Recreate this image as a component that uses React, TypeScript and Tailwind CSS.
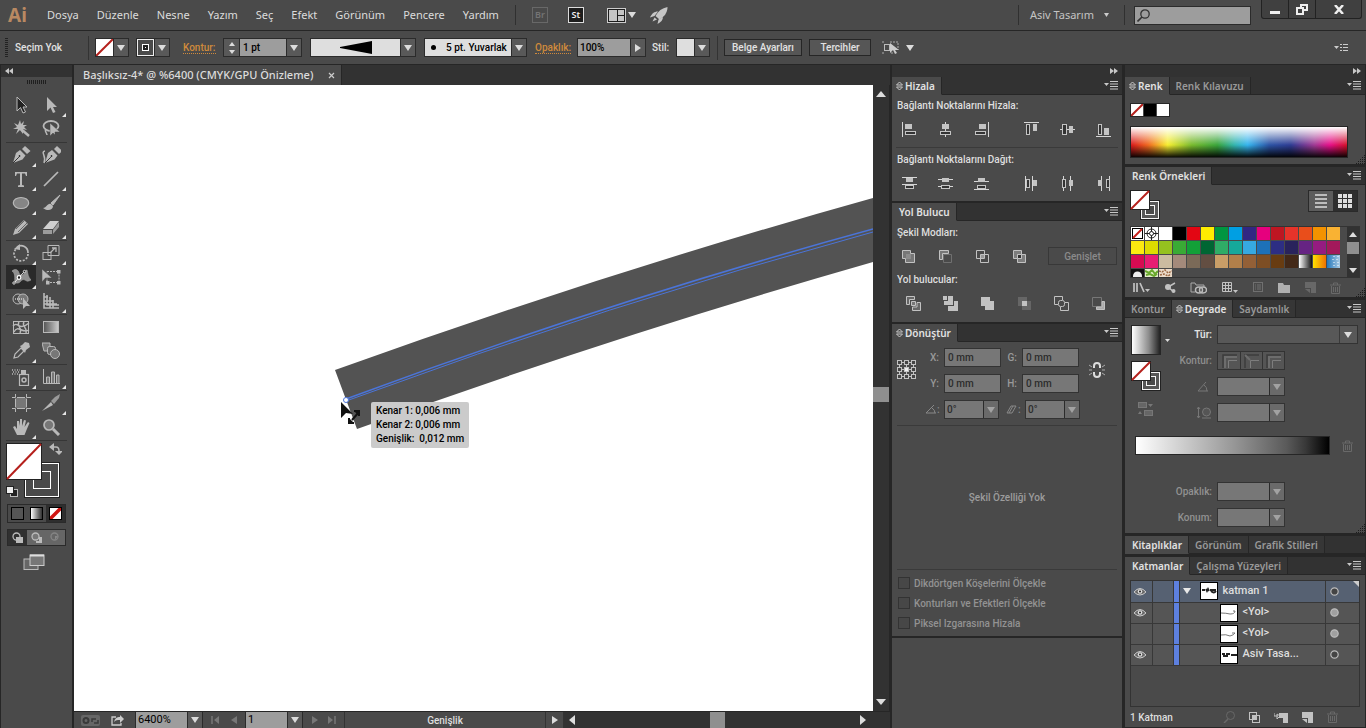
import React from "react";

type Kids = { children?: React.ReactNode };

/* ---------- shared pieces ---------- */

function Ic({ w, h, children, className = "" }: Kids & { w: number; h: number; className?: string }) {
  return (
    <svg width={w} height={h} viewBox={`0 0 ${w} ${h}`} fill="none" className={`shrink-0 ${className}`} aria-hidden="true">
      {children}
    </svg>
  );
}

const Down = ({ fill = "#dcdcdc" }: { fill?: string }) => (
  <Ic w={8} h={6}><path d="M0 0h8L4 6z" fill={fill} /></Ic>
);
const Right = ({ fill = "#dcdcdc" }: { fill?: string }) => (
  <Ic w={6} h={8}><path d="M0 0v8l6-4z" fill={fill} /></Ic>
);
const Left = ({ fill = "#dcdcdc" }: { fill?: string }) => (
  <Ic w={6} h={8}><path d="M6 0v8L0 4z" fill={fill} /></Ic>
);

const MenuGlyph = () => (
  <Ic w={14} h={9}>
    <path d="M0 2h5L2.500 5z" fill="#c8c8c8" />
    <path d="M6 .5h8M6 3h8M6 5.500h8M6 8h8" stroke="#c8c8c8" />
  </Ic>
);

const NoneSwatch = ({ s }: { s: number }) => (
  <Ic w={s} h={s}>
    <rect width={s} height={s} fill="#fff" />
    <path d={`M0 ${s}L${s} 0`} stroke="#b5201c" strokeWidth="2" />
  </Ic>
);

function FillStroke() {
  return (
    <button aria-label="Dolgu ve kontur" className="flex">
      <Ic w={30} h={30}>
        <rect x="10" y="10" width="20" height="20" fill="#222" />
        <rect x="11.500" y="11.500" width="17" height="17" fill="#565656" stroke="#f4f4f4" />
        <rect x="15.500" y="15.500" width="9" height="9" fill="#484848" stroke="#f4f4f4" />
        <rect width="20" height="20" fill="#222" />
        <rect x="1" y="1" width="18" height="18" fill="#fff" />
        <path d="M1 19L19 1" stroke="#b5201c" strokeWidth="2" />
      </Ic>
    </button>
  );
}

function ArrowBtn({ label, dim, right }: { label: string; dim?: boolean; right?: boolean }) {
  const c = dim ? "#a2a2a2" : "#dcdcdc";
  return (
    <button
      aria-label={label}
      className={`flex w-[15px] shrink-0 items-center justify-center self-stretch border-l border-[#2b2b2b] ${dim ? "bg-[#6a6a6a]" : "bg-[#595959]"}`}
    >
      {right ? <Right fill={c} /> : <Down fill={c} />}
    </button>
  );
}

function Collapse({ dir }: { dir: "l" | "r" }) {
  return (
    <div className={`flex h-3 shrink-0 items-center bg-[#323232] px-1 ${dir === "r" ? "justify-end" : ""}`}>
      <button aria-label="Panelleri daralt" className="flex">
        {dir === "l" ? (
          <Ic w={8} h={6}><path d="M4 0v6L0 3zM8 0v6L4 3z" fill="#c8c8c8" /></Ic>
        ) : (
          <Ic w={8} h={6}><path d="M0 0v6l4-3zM4 0v6l4-3z" fill="#c8c8c8" /></Ic>
        )}
      </button>
    </div>
  );
}

function Tabs({ items, active = 0, toggle, menu = true }: { items: string[]; active?: number; toggle?: boolean; menu?: boolean }) {
  return (
    <div className="flex h-[18px] shrink-0 items-stretch bg-[#323232] font-['Noto_Sans',sans-serif]" role="tablist">
      {items.map((t, i) => (
        <button
          key={t}
          role="tab"
          aria-selected={i === active}
          className={`flex items-center gap-[2px] border-r border-b border-r-[#262626] pt-px text-[10px] font-semibold whitespace-nowrap ${
            i === active
              ? `border-b-transparent bg-[#4a4a4a] text-[#e2e2e2] ${toggle ? "pr-[6px] pl-1" : "px-[6px] pl-[7px]"}`
              : "border-b-[#262626] bg-[#363636] px-[6px] text-[#999]"
          }`}
        >
          {i === active && toggle && (
            <Ic w={7} h={10}><path d="M.5 4l3-3 3 3zM.5 6l3 3 3-3z" stroke="#c8c8c8" /></Ic>
          )}
          {t}
        </button>
      ))}
      <div className="flex flex-1 items-center justify-end border-b border-[#262626] pr-1">
        {menu && <button aria-label={`${items[active]} menüsü`} className="flex"><MenuGlyph /></button>}
      </div>
    </div>
  );
}

function Panel({ children, className = "" }: Kids & { className?: string }) {
  return <section className={`flex shrink-0 flex-col border-b-2 border-[#262626] bg-[#4a4a4a] ${className}`}>{children}</section>;
}

const Grip = () => (
  <Ic w={9} h={9}>
    <path d="M8.500 0v9M6.500 2v7M4.500 4v5M2.500 6v3M.5 8v1" stroke="#1c1c1c" strokeDasharray="1 1" />
  </Ic>
);

const IconBtn = ({ label, children }: Kids & { label: string }) => (
  <button aria-label={label} className="flex h-4 w-4 items-center justify-center">{children}</button>
);

/* ---------- menu bar ---------- */

const menus = ["Dosya", "Düzenle", "Nesne", "Yazım", "Seç", "Efekt", "Görünüm", "Pencere", "Yardım"];

function MenuBar() {
  return (
    <header className="flex h-[30px] shrink-0 items-center text-[11px] text-[#dcdcdc]">
      <div className="w-[38px] pl-2 text-[19px] leading-[26px] font-bold text-[#b98962]">Ai</div>
      <nav className="flex items-center gap-[18px] pl-[9px]">
        {menus.map((m) => <button key={m}>{m}</button>)}
      </nav>
      <div className="ml-4 h-5 w-px bg-[#303030]" />
      <div className="flex items-center pl-4">
        <button className="h-4 w-4 border border-[#686868] text-[9px] leading-[14px] font-semibold text-[#747474]">Br</button>
        <button className="ml-5 h-4 w-4 border border-[#dcdcdc] bg-[#1d1d1d] text-[9px] leading-[14px] font-semibold text-[#f0f0f0]">St</button>
        <button aria-label="Belgeleri düzenle" className="ml-[23px] flex items-center gap-[2px]">
          <Ic w={19} h={15}>
            <rect x=".5" y=".5" width="18" height="14" fill="#1c1c1c" stroke="#ccc" />
            <path d="M2 2h8v11H2zM11 2h6v5h-6zM11 8h6v5h-6z" fill="#c4c4c4" />
          </Ic>
          <Down />
        </button>
        <button aria-label="GPU performansı" className="ml-[14px] flex">
          <Ic w={18} h={17}>
            <path d="M17.500 0C12 1 8 4 5.500 9l4 3.500c5-3 8-7 8-12.500z" fill="#c6c6c6" />
            <path d="M8 4.500C4 4.500 2 6.500 0 10.500l4.500-1.500zM13 10c0 3-2 5-5.500 7l1-4.500zM4.500 10.500L2.500 14.500l4.500-2z" fill="#c6c6c6" />
          </Ic>
        </button>
      </div>
      <div className="ml-auto flex h-full items-center">
        <div className="h-5 w-px bg-[#303030]" />
        <button className="flex items-center gap-[10px] pl-[11px] text-[#c4c4c4]">
          Asiv Tasarım
          <Ic w={5} h={4}><path d="M0 0h5L2.500 4z" fill="#ccc" /></Ic>
        </button>
        <div className="ml-[15px] h-5 w-px bg-[#303030]" />
        <label className="ml-[9px] flex h-[19px] w-[117px] items-center border border-[#2b2b2b] bg-[#9d9d9d] pl-[2px]">
          <Ic w={13} h={13}>
            <circle cx="8" cy="5" r="4.200" stroke="#333" strokeWidth="1.300" />
            <path d="M5 8L.5 12.500" stroke="#333" strokeWidth="1.600" />
          </Ic>
          <input aria-label="Ara" className="w-full min-w-0 bg-transparent px-1 text-black outline-none" />
        </label>
        <div className="mr-1 ml-[10px] flex h-[19px] self-start rounded-b-[3px] border border-t-0 border-[#222] bg-[#404040]">
          <button aria-label="Simge durumuna küçült" className="flex w-[27px] items-center justify-center border-r border-[#222] pt-[6px]">
            <Ic w={10} h={3}><rect width="10" height="3" fill="#eee" /></Ic>
          </button>
          <button aria-label="Geri yükle" className="flex w-[27px] items-center justify-center border-r border-[#222]">
            <Ic w={12} h={11}>
              <rect x="5" y="1" width="6" height="5" stroke="#eee" strokeWidth="2" />
              <rect x="1" y="4" width="6" height="6" fill="#404040" stroke="#eee" strokeWidth="2" />
            </Ic>
          </button>
          <button aria-label="Kapat" className="flex w-[45px] items-center justify-center">
            <Ic w={10} h={9}><path d="M1 0l8 9M9 0L1 9" stroke="#eee" strokeWidth="2.500" /></Ic>
          </button>
        </div>
      </div>
    </header>
  );
}

/* ---------- control bar ---------- */

function ControlBar() {
  const box = "flex h-[19px] shrink-0 items-stretch border border-[#2b2b2b]";
  const hot = "border-b border-dotted border-[#d08a3c] leading-3 text-[#d08a3c]";
  return (
    <div className="flex h-[35px] shrink-0 items-center border-y border-[#262626] font-['Roboto','Noto_Sans',sans-serif] text-[10px] font-medium text-[#e2e2e2]">
      <Ic w={3} h={19} className="ml-[5px]"><path d="M1.500 0v19" stroke="#222" strokeWidth="3" strokeDasharray="1 1" /></Ic>
      <span className="w-20 shrink-0 pl-[7px]">Seçim Yok</span>
      <div className="h-6 w-px bg-[#333]" />
      <div className={`${box} ml-[6px]`}>
        <NoneSwatch s={17} />
        <ArrowBtn label="Dolgu rengi" />
      </div>
      <div className={`${box} ml-[7px]`}>
        <Ic w={17} h={17}>
          <rect x=".5" y=".5" width="16" height="16" fill="#4a4a4a" stroke="#eee" />
          <rect x="5.500" y="5.500" width="6" height="6" fill="#222" stroke="#fff" />
          <rect x="8" y="8" width="1" height="1" fill="#fff" />
        </Ic>
        <ArrowBtn label="Kontur rengi" />
      </div>
      <label htmlFor="stroke" className="ml-[13px] w-10 shrink-0"><span className={hot}>Kontur:</span></label>
      <div className={box}>
        <div className="flex w-4 flex-col items-center justify-center gap-1 border-r border-[#2b2b2b] bg-[#595959]">
          <button aria-label="Artır" className="flex"><Ic w={6} h={4}><path d="M0 4h6L3 0z" fill="#dcdcdc" /></Ic></button>
          <button aria-label="Azalt" className="flex"><Ic w={6} h={4}><path d="M0 0h6L3 4z" fill="#dcdcdc" /></Ic></button>
        </div>
        <input id="stroke" defaultValue="1 pt" className="w-[46px] bg-[#9d9d9d] px-[3px] text-[10px] text-black" />
        <ArrowBtn label="Kontur kalınlıkları" />
      </div>
      <div className={`${box} ml-2`}>
        <button aria-label="Genişlik profili" className="flex w-[89px] items-center justify-center bg-[#dedede]">
          <Ic w={32} h={13}><path d="M0 6L32 0v13L0 7z" fill="#000" /></Ic>
        </button>
        <ArrowBtn label="Genişlik profilleri" />
      </div>
      <div className={`${box} ml-2`}>
        <button className="flex w-[86px] items-center gap-[10px] bg-[#dedede] pl-[6px] whitespace-nowrap text-black">
          <Ic w={5} h={5}><circle cx="2.500" cy="2.500" r="2.500" fill="#000" /></Ic>
          5 pt. Yuvarlak
        </button>
        <ArrowBtn label="Fırça tanımları" />
      </div>
      <label htmlFor="opacity" className="ml-2 w-[42px] shrink-0"><span className={hot}>Opaklık:</span></label>
      <div className={box}>
        <input id="opacity" defaultValue="100%" className="w-[52px] bg-[#9d9d9d] px-[2px] text-[10px] text-black" />
        <ArrowBtn label="Opaklık kaydırıcısı" right />
      </div>
      <span className="ml-[6px] w-6 shrink-0">Stil:</span>
      <div className={box}>
        <button aria-label="Grafik stili" className="w-[17px] bg-[#dedede]" />
        <ArrowBtn label="Grafik stilleri" />
      </div>
      <div className="mr-[6px] ml-[7px] h-6 w-px bg-[#333]" />
      <button className="h-[17px] w-[78px] border border-[#262626] bg-[#565656] leading-[14px] whitespace-nowrap">Belge Ayarları</button>
      <button className="ml-[7px] h-[17px] w-[62px] border border-[#262626] bg-[#565656] leading-[14px]">Tercihler</button>
      <button aria-label="Benzer nesneleri seç" className="ml-[11px] flex items-center gap-[7px]">
        <Ic w={17} h={14}>
          <rect x="2.500" y="3.500" width="5" height="6" stroke="#bbb" />
          <path d="M0 1h2M0 12h2M8 1h8v8M9 12h2" stroke="#aaa" strokeDasharray="2 1" />
          <path d="M8 2v10l3-3 2 4 2-1-2-3h4z" fill="#ccc" />
        </Ic>
        <Down />
      </button>
      <button aria-label="Denetim menüsü" className="mr-[18px] ml-auto flex">
        <Ic w={14} h={9}>
          <path d="M0 3h5L2.500 6z" fill="#ccc" />
          <path d="M6 1.500h2M6 4.500h2M6 7.500h2M9 1.500h5M9 4.500h5M9 7.500h5" stroke="#ccc" />
        </Ic>
      </button>
    </div>
  );
}

/* ---------- tools ---------- */

const L = "#b9b9b9";
type Tool = { n: string; d: React.ReactNode; more?: boolean; on?: boolean };

const pen = <><path d="M1 17l3-10 4-3 5.500 5.500-3 4z" fill={L} /><path d="M10 3l3-3 5.500 5-3.500 3z" fill={L} /><path d="M1 17l6-6" stroke="#333" /><circle cx="7.500" cy="10" r="1.300" fill="#222" stroke="#eee" strokeWidth=".5" /></>;

const groups: Tool[][] = [
  [
    { n: "Seçim", d: <path d="M5 1v14l3.500-3.500L11 17l2.500-1L11 11h4z" fill="#222" stroke={L} /> },
    { n: "Doğrudan Seçim", more: true, d: <path d="M5 1v14l3.500-3.500L11 17l2.500-1L11 11h4z" fill={L} /> },
    { n: "Sihirli Değnek", d: <><path d="M8 0l1 4 3-3-1 4 4 0-3 2 3 3-4-1 0 5-3-4-4 4 2-5-5 0 4-2-3-4 4 2z" fill={L} /><path d="M9 9l8 7" stroke={L} strokeWidth="2.500" /></> },
    { n: "Kement", d: <><ellipse cx="9" cy="6" rx="7.500" ry="5" stroke={L} strokeWidth="1.800" /><path d="M4 9c-2 2 1 4 1 6" stroke={L} strokeWidth="1.500" /><path d="M8 3v13l3-3 2 2 0-3h5z" fill={L} stroke="#444" strokeWidth=".5" /></> },
  ],
  [
    { n: "Kalem", more: true, d: pen },
    { n: "Eğrilik", d: <><g transform="translate(2 0)">{pen}</g><path d="M3 5c-5 1 2 5-1 12" stroke={L} strokeWidth="1.500" /></> },
    { n: "Metin", more: true, d: <path d="M3 2h12v4h-1l-1-2.500h-3V15l2 .5V17H6v-1.500L8 15V3.500H5L4 6H3z" fill={L} /> },
    { n: "Çizgi Parçası", more: true, d: <path d="M2 16L16 2" stroke={L} strokeWidth="1.700" /> },
    { n: "Elips", more: true, d: <ellipse cx="9" cy="9" rx="7.700" ry="5.500" fill="#858585" stroke={L} strokeWidth="1.200" /> },
    { n: "Boya Fırçası", more: true, d: <><path d="M18 1L9 9l2 2z" fill={L} stroke={L} /><path d="M9 10c-4-1-4 4-8 4 3 3 10 3 10-2z" fill={L} /></> },
    { n: "Kurşun Kalem", more: true, d: <><path d="M1 17l2-6L12 2l4 4-9 9z" fill={L} /><path d="M4 11l9-9M6 14l9-9" stroke="#666" /></> },
    { n: "Silgi", more: true, d: <><path d="M1 11l7-8h9l-6 8z" fill="#d0d0d0" /><path d="M1 12h9v4H1zM11 12l6-8v5l-6 7z" fill="#9c9c9c" /></> },
  ],
  [
    { n: "Döndürme", more: true, d: <><path d="M5 3a7 7 0 0 1 11 6" stroke={L} strokeWidth="1.700" /><path d="M16 10a7 7 0 1 1-12-5" stroke={L} strokeWidth="1.700" strokeDasharray="2 1.500" /><path d="M8 0L2 5l6 1z" fill={L} /></> },
    { n: "Ölçekleme", more: true, d: <><path d="M6 1.500h11v10H6z" stroke={L} fill="#444" /><rect x="1" y="8.500" width="8" height="7" stroke={L} /><path d="M8 9l5-5M10 4h4v4" stroke={L} strokeWidth="1.300" /></> },
    { n: "Genişlik", more: true, on: true, d: <><path d="M0 3c4-3 6-1 7 2s3 3 5 1 1-4 3-4c1 4 1 7 4 10-4 2-4 1-6 0-4-2-4 4-9 3-3-1 1-9-4-12z" fill="#8f8f8f" stroke="#aaa" strokeWidth=".6" /><path d="M2 15L12 4" stroke="#eee" /><circle cx="7" cy="9.500" r="1.800" fill="#222" stroke="#fff" strokeWidth="1.200" /><circle cx="2" cy="15" r="1.200" fill="#222" stroke="#ddd" /><circle cx="12.500" cy="3.500" r="1.200" fill="#222" stroke="#ddd" /></> },
    { n: "Serbest Dönüştürme", d: <><path d="M5 3.500h12v11H5z" stroke={L} strokeDasharray="2 1" /><path d="M15 2h3.500v3.500H15zM15 13h3.500v3.500H15zM4 13h3.500v3.500H4z" fill={L} /><path d="M0 1v13l3.500-4H10z" fill={L} stroke="#444" strokeWidth=".5" /></> },
    { n: "Şekil Oluşturucu", more: true, d: <><circle cx="6" cy="7" r="5" stroke={L} /><circle cx="11" cy="7" r="5" fill="#777" stroke={L} /><path d="M3 7h9" stroke="#fff" strokeDasharray="1 1" /><path d="M11 6v11l3-3h4z" fill={L} /></> },
    { n: "Perspektif Izgarası", more: true, d: <path d="M2 1v15h15M5 3v10h12M8 5v11M11 8v8M2 5h4M2 9h9M2 12h13" stroke={L} strokeWidth="1.600" /> },
  ],
  [
    { n: "Kafes", d: <><rect x="1.500" y="3.500" width="15" height="12" stroke={L} /><path d="M1 8c5-6 5 6 16-3M2 14c4-8 8 2 15-2M7 4c-3 4 4 6 1 11M12 4c-3 4 4 6 2 11" stroke={L} strokeWidth="1.400" /></> },
    { n: "Degrade", d: <><defs><linearGradient id="tg"><stop stopColor="#555" /><stop offset="1" stopColor="#ccc" /></linearGradient></defs><rect x="1.500" y="3.500" width="15" height="11" fill="url(#tg)" stroke={L} /></> },
    { n: "Damlalık", more: true, d: <><path d="M2 16l1-4 6-6 3 3-6 6z" stroke={L} strokeWidth="1.200" /><path d="M8 4l2-1 3-3 4 1 1 4-4 3-1 3z" fill={L} /></> },
    { n: "Karışım", d: <><path d="M0 1h8v8H2z" fill="#777" stroke={L} /><rect x="5.500" y="4.500" width="8" height="8" rx="2" fill="#666" stroke={L} /><circle cx="13" cy="12" r="4.500" fill="#777" stroke={L} /></> },
  ],
  [
    { n: "Sembol Püskürtücü", more: true, d: <><path d="M0 2h8M1 4h7M0 6h6" stroke={L} strokeDasharray="1 1.500" strokeWidth="1.500" /><rect x="7.500" y="6.500" width="9" height="11" stroke={L} strokeWidth="1.200" /><path d="M9 2h5v4H9z" fill={L} /><circle cx="12" cy="12" r="2" stroke={L} strokeWidth="1.500" /></> },
    { n: "Sütun Grafiği", more: true, d: <><path d="M1.500 1v14.500H18" stroke={L} /><path d="M4.500 15V9h3v6M9.500 15V4h3v11M14.500 15V7h2.500v8" fill="#777" stroke={L} /></> },
  ],
  [
    { n: "Çalışma Yüzeyi", d: <><rect x="3" y="4" width="12" height="10" fill="#777" /><path d="M3.500 0v3.500H0M14.500 0v3.500H19M3.500 18v-3.500H0M14.500 18v-3.500H19M5 3.500h8M5 14.500h8M3.500 5v8M14.500 5v8" stroke={L} /></> },
    { n: "Dilimleme", more: true, d: <><path d="M0 17l9-9 2 3z" fill={L} /><path d="M9 7l4-4 5-3-1 4-5 6z" fill="#999" /></> },
    { n: "El", more: true, d: <path d="M5 17L1 9l2-1 2 3V3h2l1 5V1h2v7l2-6 2 .5L12.500 9 16 4l1.500 1-3 7-2 5z" fill={L} /> },
    { n: "Yakınlaştırma", d: <><circle cx="7" cy="7" r="5" fill="#777" stroke={L} strokeWidth="1.700" /><path d="M11 11l6 6" stroke={L} strokeWidth="3" /></> },
  ],
];

function Toolbar() {
  return (
    <aside className="flex w-[74px] shrink-0 flex-col border-r-2 border-l border-[#262626] bg-[#4a4a4a]">
      <Collapse dir="l" />
      <div className="flex h-4 shrink-0 justify-center pt-[3px]">
        <Ic w={20} h={4}><path d="M0 2h20" stroke="#1f1f1f" strokeWidth="4" strokeDasharray="1 1" /></Ic>
      </div>
      <div className="flex flex-col px-[5px]">
        {groups.map((g, i) => (
          <div key={i} className="grid grid-cols-[30px_30px] border-b border-[#363636] pb-px">
            {g.map((t) => (
              <button key={t.n} aria-label={t.n} className={`relative flex h-6 w-[30px] items-center justify-center ${t.on ? "bg-[#2a2a2a]" : ""}`}>
                <Ic w={19} h={18}>{t.d}</Ic>
                {t.more && (
                  <span className="absolute right-0 bottom-0 flex"><Ic w={4} h={4}><path d="M4 0v4H0z" fill="#e6e6e6" /></Ic></span>
                )}
              </button>
            ))}
          </div>
        ))}
      </div>
      <div className="flex flex-col items-start pt-[2px] pl-[5px]">
        <button aria-label="Dolgu ve kontur" className="flex">
          <Ic w={56} h={55}>
            <rect x="18" y="19" width="36" height="36" fill="#222" />
            <rect x="19.500" y="20.500" width="33" height="33" fill="#4a4a4a" stroke="#fff" />
            <rect x="27.500" y="28.500" width="17" height="17" fill="#4a4a4a" stroke="#fff" />
            <rect width="36" height="37" fill="#222" />
            <rect x="1" y="1" width="34" height="35" fill="#fff" />
            <path d="M1 36L35 1" stroke="#b5201c" strokeWidth="2" />
            <path d="M47 4h3q3 0 3 4" stroke={L} strokeWidth="1.500" />
            <path d="M48 0v8l-5-4zM49 8h8L53 12z" fill={L} />
            <rect x="4.500" y="46.500" width="7" height="7" fill="#222" stroke="#bbb" />
            <rect x=".5" y="43.500" width="7" height="7" fill="#eee" stroke="#222" />
          </Ic>
        </button>
        <div className="mt-[6px] ml-px flex h-[19px] border border-[#2a2a2a]">
          <button aria-label="Renk" className="flex w-[19px] items-center justify-center"><Ic w={13} h={13}><rect x=".5" y=".5" width="12" height="12" fill="#555" stroke="#000" /></Ic></button>
          <button aria-label="Degrade" className="flex w-[19px] items-center justify-center"><span className="h-[13px] w-[13px] border border-black bg-linear-to-r from-white to-[#333]" /></button>
          <button aria-label="Yok" className="flex w-[19px] items-center justify-center bg-[#2e2e2e]"><span className="border border-black"><Ic w={11} h={11}><rect width="11" height="11" fill="#fff" /><path d="M0 11L11 0" stroke="#d01512" strokeWidth="3.500" /></Ic></span></button>
        </div>
        <div className="mt-[6px] ml-px flex h-[17px] border border-[#2a2a2a] bg-[#666]">
          {["Normal Çiz", "Arkaya Çiz", "İçine Çiz"].map((n, i) => (
            <button key={n} aria-label={n} className={`flex w-[19px] items-center justify-center ${i === 0 ? "bg-[#303030]" : ""}`}>
              <Ic w={11} h={11}>
                <circle cx="4.500" cy="4.500" r="3.500" fill={i === 1 ? "#777" : "none"} stroke={i === 2 ? "#858585" : "#bbb"} strokeWidth="1.300" />
                {i < 2 ? <path d={i === 0 ? "M4 5h7v6H4z" : "M8 5h3v6H5V9h3z"} fill="#bbb" /> : <path d="M5 4h3L5 8z" fill="#888" />}
              </Ic>
            </button>
          ))}
        </div>
        <button aria-label="Ekran modu" className="mt-2 ml-[17px] flex">
          <Ic w={22} h={17}>
            <rect x="1" y="5" width="14" height="10.500" fill="#666" stroke="#bbb" />
            <rect x="7" y="1" width="14" height="10.500" fill="#777" stroke="#ccc" />
            <path d="M7 1.500h14" stroke="#ddd" strokeWidth="2" />
          </Ic>
        </button>
      </div>
    </aside>
  );
}

/* ---------- document ---------- */

function DocumentArea() {
  return (
    <main className="flex min-w-0 flex-1 flex-col bg-[#323232]">
      <div className="flex h-5 shrink-0 items-stretch">
        <div className="flex items-center gap-[15px] border-r border-[#262626] bg-[#4a4a4a] pr-[6px] pl-[9px] text-[11px] font-medium whitespace-nowrap text-[#dcdcdc]">
          <span>Başlıksız-4* @ %6400 (CMYK/GPU Önizleme)</span>
          <button aria-label="Sekmeyi kapat" className="flex"><Ic w={7} h={7}><path d="M1 1l5 5M6 1L1 6" stroke="#ccc" strokeWidth="1.200" /></Ic></button>
        </div>
      </div>
      <div className="flex min-h-0 flex-1">
        <div className="relative min-w-0 flex-1 overflow-hidden bg-white">
          <svg width="799" height="626" viewBox="0 0 799 626" className="block" role="img" aria-label="Kontur çizimi">
            <path d="M261 285Q530 188 799 113V177Q540 251 283 344Z" fill="#535353" />
            <path d="M272 314Q535 216 799 144" stroke="#4b74d8" strokeWidth="1.500" fill="none" />
            <path d="M272 316Q535 219 799 147" stroke="#4b74d8" fill="none" />
            <circle cx="272" cy="315" r="2.500" fill="#fff" stroke="#4b74d8" />
            <path d="M267 317v16l5-5 7 1z" fill="#111" />
            <path d="M278 335l7-8" stroke="#111" strokeWidth="2" />
            <path d="M280 326h5v5M275 333v5h5" fill="#111" stroke="#111" strokeWidth="2" />
          </svg>
          <div className="absolute top-[317px] left-[297px] rounded-[2px] bg-[#cbcbcb] px-[5px] py-[2px] font-['Roboto','Noto_Sans',sans-serif] text-[10px] leading-[14px] font-medium whitespace-nowrap text-black">
            <div>Kenar 1: 0,006 mm</div>
            <div>Kenar 2: 0,006 mm</div>
            <div>Genişlik:&nbsp; 0,012 mm</div>
          </div>
        </div>
        <div className="flex w-[17px] shrink-0 flex-col items-center border-r border-[#262626] bg-[#323232] py-[6px]">
          <button aria-label="Yukarı kaydır" className="flex"><Ic w={10} h={6}><path d="M0 6h10L5 0z" fill="#ddd" /></Ic></button>
          <div className="flex-[75]" />
          <div className="h-[15px] w-full bg-[#8f8f8f]" />
          <div className="flex-[77]" />
          <button aria-label="Aşağı kaydır" className="flex"><Ic w={10} h={6}><path d="M0 0h10L5 6z" fill="#ddd" /></Ic></button>
        </div>
      </div>
      <footer className="flex h-[17px] shrink-0 items-stretch border-t border-[#262626] bg-[#4a4a4a] font-['Roboto','Noto_Sans',sans-serif] text-[10px] font-medium text-[#ddd]">
        <div className="flex w-[61px] items-center gap-[11px] pl-[7px]">
          <button aria-label="Eşitleme" className="flex">
            <Ic w={19} h={11}>
              <rect width="19" height="11" rx="2" fill="#666" />
              <circle cx="5" cy="5.500" r="2.500" stroke="#3a3a3a" strokeWidth="2" />
              <path d="M11 7V4h4M17 5v3h-4" stroke="#3a3a3a" strokeWidth="1.500" />
            </Ic>
          </button>
          <button aria-label="Paylaş" className="flex">
            <Ic w={13} h={12}><path d="M5 3H1v8h9V9" stroke="#ccc" strokeWidth="1.300" /><path d="M3 8c1-4 3-5 6-5V1l4 4-4 4V6C6 6 5 6 3 8z" fill="#ccc" /></Ic>
          </button>
        </div>
        <div className="flex items-stretch border-x border-[#2b2b2b]">
          <input aria-label="Yakınlaştırma düzeyi" defaultValue="6400%" className="w-[51px] bg-[#9d9d9d] px-[2px] pt-px text-[11px] font-normal text-black" />
          <ArrowBtn label="Yakınlaştırma düzeyleri" />
        </div>
        <div className="flex w-[42px] items-center justify-center gap-3">
          <button aria-label="İlk" className="flex"><Ic w={8} h={8}><path d="M1 0v8" stroke="#777" strokeWidth="1.500" /><path d="M8 0v8L3 4z" fill="#777" /></Ic></button>
          <button aria-label="Önceki" className="flex"><Left fill="#777" /></button>
        </div>
        <div className="flex items-stretch border-x border-[#2b2b2b]">
          <input aria-label="Çalışma yüzeyi" defaultValue="1" className="w-[41px] bg-[#9d9d9d] px-[2px] pt-px text-[11px] font-normal text-black" />
          <ArrowBtn label="Çalışma yüzeyleri" />
        </div>
        <div className="flex w-[42px] items-center justify-center gap-[10px] border-r border-[#333]">
          <button aria-label="Sonraki" className="flex"><Right fill="#777" /></button>
          <button aria-label="Son" className="flex"><Ic w={8} h={8}><path d="M7 0v8" stroke="#777" strokeWidth="1.500" /><path d="M0 0v8l5-4z" fill="#777" /></Ic></button>
        </div>
        <div className="flex w-[200px] items-center justify-center pt-px">Genişlik</div>
        <button aria-label="Durum menüsü" className="flex w-[19px] items-center justify-center border-x border-[#333]"><Right /></button>
        <div className="flex flex-1 items-center justify-between bg-[#323232] pr-[24px] pl-[5px]">
          <button aria-label="Sola kaydır" className="flex"><Ic w={6} h={10}><path d="M6 0v10L0 5z" fill="#ddd" /></Ic></button>
          <div className="h-full w-[15px] bg-[#8f8f8f]" />
          <button aria-label="Sağa kaydır" className="flex"><Ic w={6} h={10}><path d="M0 0v10l6-5z" fill="#ddd" /></Ic></button>
        </div>
      </footer>
    </main>
  );
}

/* ---------- align / pathfinder / transform ---------- */

const bar = (x: number, y: number, w: number, h: number, solid = false) => (
  <rect x={x + 0.5} y={y + 0.5} width={w - 1} height={h - 1} fill={solid ? "#c4c4c4" : "#333"} stroke="#c4c4c4" />
);
const ln = (d: string) => <path d={d} stroke="#d6d6d6" />;

const alignIcons: [string, React.ReactNode][] = [
  ["Sola hizala", <>{ln("M.5 0v15")}{bar(3, 2, 7, 5, true)}{bar(3, 9, 11, 4)}</>],
  ["Yatay ortala", <>{ln("M7.500 0v15")}{bar(4, 2, 7, 5, true)}{bar(2, 9, 11, 4)}</>],
  ["Sağa hizala", <>{ln("M14.500 0v15")}{bar(5, 2, 7, 5, true)}{bar(1, 9, 11, 4)}</>],
  ["Üste hizala", <>{ln("M0 .5h15")}{bar(2, 2, 4, 11)}{bar(9, 2, 4, 7, true)}</>],
  ["Dikey ortala", <>{ln("M0 7.500h15")}{bar(2, 2, 5, 11)}{bar(9, 4, 4, 7, true)}</>],
  ["Alta hizala", <>{ln("M0 14.500h15")}{bar(2, 2, 4, 11)}{bar(8, 6, 5, 7, true)}</>],
];
const distIcons: [string, React.ReactNode][] = [
  ["Üstten dağıt", <>{ln("M0 1.500h15M0 8.500h15")}{bar(4, 2, 7, 4, true)}{bar(3, 9, 9, 4)}</>],
  ["Dikey dağıt", <>{ln("M0 3.500h15M0 10.500h15")}{bar(4, 2, 7, 4, true)}{bar(3, 9, 9, 4)}</>],
  ["Alttan dağıt", <>{ln("M0 5.500h15M0 13.500h15")}{bar(4, 2, 7, 4, true)}{bar(3, 9, 9, 4)}</>],
  ["Soldan dağıt", <>{ln("M1.500 0v15M8.500 0v15")}{bar(2, 3, 4, 9)}{bar(9, 4, 4, 6, true)}</>],
  ["Yatay dağıt", <>{ln("M3.500 0v15M10.500 0v15")}{bar(2, 3, 4, 9)}{bar(9, 4, 4, 6, true)}</>],
  ["Sağdan dağıt", <>{ln("M5.500 0v15M13.500 0v15")}{bar(2, 4, 4, 6, true)}{bar(10, 3, 4, 9)}</>],
];

function AlignRow({ icons }: { icons: [string, React.ReactNode][] }) {
  return (
    <div className="flex justify-between pr-[7px] pl-[5px]">
      <div className="flex gap-5">
        {icons.slice(0, 3).map(([n, d]) => <IconBtn key={n} label={n}><Ic w={15} h={15}>{d}</Ic></IconBtn>)}
      </div>
      <div className="flex gap-5">
        {icons.slice(3).map(([n, d]) => <IconBtn key={n} label={n}><Ic w={15} h={15}>{d}</Ic></IconBtn>)}
      </div>
    </div>
  );
}

const C = "#c2c2c2";
const modes: [string, React.ReactNode][] = [
  ["Birleştir", <><path d="M1.500 1.500h8v3h4v9h-9v-4h-3z" fill="#777" stroke={C} /><path d="M5 5h5v5H5z" fill="#8c8c8c" /></>],
  ["Öndekini çıkar", <><path d="M1.500 1.500h9v3h-6v6h-3z" fill="#777" stroke={C} /><path d="M5.500 5.500h8v8h-8z" stroke="#707070" /></>],
  ["Kesiştir", <><path d="M1.500 1.500h8v8h-8zM5.500 5.500h8v8h-8z" stroke={C} /><path d="M6 6h3v3H6z" fill="#999" /></>],
  ["Hariç tut", <><path d="M1.500 1.500h8v8h-8zM5.500 5.500h8v8h-8z" fill="#7d7d7d" stroke={C} /><path d="M5.500 5.500h4v4h-4z" fill="#333" stroke={C} /></>],
];
const finders: [string, React.ReactNode][] = [
  ["Böl", <><path d="M.5 .5h8v3h-5v5h-3zM11 6.500h3.500v8H6.500V11H11z" fill="#666" stroke={C} /><path d="M5.500 5.500h4v4h-4z" fill="#777" stroke={C} /></>],
  ["Kırp", <path d="M0 0h4v4H0zM5 0h5v9H1V5h4zM11 5h4v10H5v-5h6z" fill={C} />],
  ["Birleştir ve kes", <path d="M1 1h9v4h4v9H5v-4H1z" fill={C} />],
  ["Kes", <><path d="M1 1h9v9H1zM5 5h9v9H5z" fill="#666" /><path d="M5 5h5v5H5z" fill={C} /></>],
  ["Anahat", <><path d="M4 8.500H.5v-8h8V4M6.500 11v3.500h8v-8H11" stroke={C} /><rect x="4.500" y="4.500" width="6" height="6" rx="2" stroke={C} /></>],
  ["Eksi arka", <><path d="M1.500 1.500h9v9h-9z" stroke="#777" /><path d="M11 5.500h2.500v8h-8V11H11z" fill="#aaa" stroke={C} /></>],
];

function Field({ id, label, v }: { id: string; label: string; v: string }) {
  return (
    <div className="flex items-center gap-[5px]">
      <label htmlFor={id} className="w-[14px] text-right text-[#999]">{label}</label>
      <input id={id} defaultValue={v} className="h-[19px] w-[57px] border border-[#333] bg-[#777] px-[3px] text-[10px] text-[#2c2c2c]" />
    </div>
  );
}

function Combo({ label, v = "", w = "w-[51px]" }: { label: string; v?: string; w?: string }) {
  return (
    <div className="flex h-[19px] border border-[#333]">
      <input id={label} aria-label={label} defaultValue={v} className={`${w} bg-[#777] px-[2px] text-[10px] text-[#2c2c2c]`} />
      <ArrowBtn label={`${label} seçenekleri`} dim />
    </div>
  );
}

const refPoints = [2.5, 9.5, 16.5];

function MiddleColumn() {
  return (
    <aside className="flex w-[234px] shrink-0 flex-col border-r-2 border-l-2 border-[#262626] bg-[#4a4a4a] font-['Roboto','Noto_Sans',sans-serif] text-[10px] font-medium text-[#dedede]">
      <Collapse dir="r" />
      <Panel>
        <Tabs items={["Hizala"]} toggle />
        <div className="flex flex-col px-1 pt-[3px] pb-[10px]">
          <h3 className="h-4 pl-px leading-4">Bağlantı Noktalarını Hizala:</h3>
          <div className="py-[7px]"><AlignRow icons={alignIcons} /></div>
          <hr className="mt-[3px] mb-1 border-[#3a3a3a]" />
          <h3 className="h-4 pl-px leading-4">Bağlantı Noktalarını Dağıt:</h3>
          <div className="pt-[7px]"><AlignRow icons={distIcons} /></div>
        </div>
      </Panel>
      <Panel>
        <Tabs items={["Yol Bulucu"]} />
        <div className="flex flex-col px-[5px] pt-1 pb-[11px]">
          <h3 className="h-4 leading-4">Şekil Modları:</h3>
          <div className="flex items-center gap-[21px] py-[6px] pl-1">
            {modes.map(([n, d]) => <IconBtn key={n} label={n}><Ic w={15} h={15}>{d}</Ic></IconBtn>)}
            <button className="h-[18px] w-[70px] border border-[#383838] text-[#8a8a8a]">Genişlet</button>
          </div>
          <h3 className="mt-px h-4 leading-4">Yol bulucular:</h3>
          <div className="flex justify-between pt-[7px] pr-[10px] pl-2">
            {finders.map(([n, d]) => <IconBtn key={n} label={n}><Ic w={15} h={15}>{d}</Ic></IconBtn>)}
          </div>
        </div>
      </Panel>
      <Panel>
        <Tabs items={["Dönüştür"]} toggle />
        <div className="flex flex-col px-[5px] pt-[6px] pb-[3px]">
          <div className="flex items-start">
            <button aria-label="Başvuru noktası" className="mt-3 flex">
              <Ic w={19} h={19}>
                <path d="M2.500 2.500h14v14h-14zM9.500 2v15M2 9.500h15" stroke={C} />
                {refPoints.map((x) => refPoints.map((y) => (
                  <rect key={`${x}-${y}`} x={x - 2} y={y - 2} width="4" height="4" fill={x === 9.5 && y === 9.5 ? "#eee" : "#444"} stroke={C} />
                )))}
              </Ic>
            </button>
            <div className="flex flex-col gap-[7px] pl-[9px]">
              <div className="flex gap-[2px]"><Field id="tx" label="X:" v="0 mm" /><Field id="tw" label="G:" v="0 mm" /></div>
              <div className="flex gap-[2px]"><Field id="ty" label="Y:" v="0 mm" /><Field id="th" label="H:" v="0 mm" /></div>
              <div className="flex items-center gap-[5px] text-[#888]">
                <label htmlFor="Döndür" className="flex w-[14px] items-center gap-px"><Ic w={11} h={9}><path d="M9 0L1 8h10M7 3q3 2 3 5" stroke="#888" /></Ic>:</label>
                <Combo label="Döndür" v="0°" w="w-[38px]" />
                <label htmlFor="Yamult" className="ml-[2px] flex w-[14px] items-center gap-px"><Ic w={11} h={9}><path d="M5 1h5L6 8H1zM7 1L3 8" stroke="#888" /></Ic>:</label>
                <Combo label="Yamult" v="0°" w="w-[38px]" />
              </div>
            </div>
            <button aria-label="Oranları koru" className="mt-[14px] ml-[9px] flex">
              <Ic w={16} h={16}>
                <path d="M5 6V4q0-3 3-3t3 3v2M5 10v2q0 3 3 3t3-3v-2" stroke="#ddd" strokeWidth="2" />
                <path d="M0 3l3 2M0 8h3M0 13l3-2M16 3l-3 2M16 8h-3M16 13l-3-2" stroke="#aaa" />
              </Ic>
            </button>
          </div>
          <hr className="mt-[6px] border-[#3a3a3a]" />
          <div className="flex h-[143px] items-center justify-center text-[#9c9c9c]">Şekil Özelliği Yok</div>
          <hr className="mb-[3px] border-[#3a3a3a]" />
          {["Dikdörtgen Köşelerini Ölçekle", "Konturları ve Efektleri Ölçekle", "Piksel Izgarasına Hizala"].map((t) => (
            <label key={t} className="flex h-5 items-center gap-1 pl-px text-[#929292]">
              <input type="checkbox" className="h-3 w-3 appearance-none border border-[#333] bg-[#474747]" />
              {t}
            </label>
          ))}
        </div>
      </Panel>
    </aside>
  );
}

/* ---------- colour / swatches / gradient / layers ---------- */

const swatches = [
  "#fff", "#000", "#e30613", "#ffed00", "#009640", "#009fe3", "#312783", "#e6007e", "#be1622", "#e6332a", "#e94e1b", "#f39200", "#f9b233",
  "#fcea10", "#dedc00", "#95c11f", "#3aaa35", "#13a038", "#006633", "#2fac66", "#16a89b", "#36a9e1", "#1d71b8", "#2d2e83", "#29235c", "#662483", "#951b81", "#a3195b",
  "#d60b52", "#e71d73", "#cbbba0", "#a48a7b", "#7b6a58", "#634e42", "#ca9e67", "#b17f4a", "#936037", "#7d4e24", "#683c11", "#432918",
];

function Swatches() {
  return (
    <div className="mx-[5px] flex border border-[#333]">
      <div className="grid h-[50px] flex-1 grid-cols-[repeat(15,13px)] content-start gap-px overflow-hidden">
        <button aria-label="Yok" className="flex h-[13px]"><Ic w={13} h={13}><rect width="13" height="13" fill="#fff" /><rect x="1.500" y="1.500" width="10" height="10" stroke="#000" /><path d="M2 11L11 2" stroke="#c8201c" strokeWidth="2" /></Ic></button>
        <button aria-label="Kayıt" className="flex h-[13px]"><Ic w={13} h={13}><rect width="13" height="13" fill="#fff" /><path d="M6.500 0v13M0 6.500h13" stroke="#222" /><circle cx="6.500" cy="6.500" r="4.500" stroke="#222" /><circle cx="6.500" cy="6.500" r="2" stroke="#222" fill="#fff" /></Ic></button>
        {swatches.map((c) => <button key={c} aria-label={c} className="h-[13px]" style={{ backgroundColor: c }} />)}
        <button aria-label="Beyaz, siyah" className="h-[13px] bg-[linear-gradient(to_right,#fff,#111)]" />
        <button aria-label="Turuncu, sarı" className="h-[13px] bg-[linear-gradient(to_right,#ffe100,#ee7203)]" />
        <button aria-label="Gökyüzü" className="flex h-[13px] bg-[linear-gradient(to_right,#2476b9,#a9cbe6)]">
          <Ic w={13} h={13}><path d="M6 1.500h7M5 4.500h8M6 7.500h7M6 10.500h7" stroke="#fff" strokeOpacity=".5" strokeDasharray="2 2" /></Ic>
        </button>
        <button aria-label="Küre" className="flex h-[13px]"><Ic w={13} h={13}><rect width="13" height="13" fill="#111" /><circle cx="6.500" cy="7" r="4.500" fill="#eee" /></Ic></button>
        <button aria-label="Yaprak deseni" className="flex h-[13px]"><Ic w={13} h={13}><rect width="13" height="13" fill="#e4efcb" /><path d="M0 2l4 2 3-3 3 4 3-3M1 6l4-1 4 2 3-2" stroke="#69a82d" strokeWidth="2" /></Ic></button>
        <button aria-label="Taş deseni" className="flex h-[13px]"><Ic w={13} h={13}><rect width="13" height="13" fill="#ecdccb" /><path d="M0 2l3 1 3-2 3 3 4-2M1 6l4-1 4 2 3-2" stroke="#9c6a45" strokeWidth="1.500" strokeDasharray="2 1" /></Ic></button>
      </div>
      <div className="flex w-3 flex-col items-center bg-[#323232]">
        <button aria-label="Yukarı" className="flex h-[15px] items-center"><Ic w={8} h={5}><path d="M0 5h8L4 0z" fill="#ddd" /></Ic></button>
        <div className="h-[12px] w-full bg-[#8f8f8f]" />
        <button aria-label="Aşağı" className="mt-auto flex h-[14px] items-center"><Ic w={8} h={5}><path d="M0 0h8L4 5z" fill="#ddd" /></Ic></button>
      </div>
    </div>
  );
}

const Trash = () => (
  <Ic w={11} h={12}><path d="M0 3h11M3.500 3V1h4v2M1.500 4v7.500h8V4M3.500 5v5M5.500 5v5M7.500 5v5" stroke="#696969" /></Ic>
);
const NewDoc = ({ c }: { c: string }) => (
  <Ic w={11} h={11}><path d="M0 0h11v11H6V6H0z" fill={c} /><path d="M0 7h5v4z" fill={c} /></Ic>
);

const swatchTools: [string, React.ReactNode][] = [
  ["Kitaplıklar", <Ic w={17} h={11}><path d="M1 1v9M4 1v9M7 1l4 9" stroke={C} strokeWidth="1.700" /><path d="M12 7h5l-2.500 3z" fill={C} /></Ic>],
  ["Paylaş", <Ic w={11} h={11}><path d="M10 1L3 5l6 5" stroke={C} strokeWidth="1.500" /><circle cx="3" cy="5" r="3" fill={C} /><circle cx="8.500" cy="9" r="2" fill={C} /></Ic>],
  ["Renk temaları", <Ic w={17} h={12}><path d="M5 10H1V1h4l1 2h8v2" stroke="#aaa" /><ellipse cx="9" cy="8" rx="3.500" ry="3" stroke="#bbb" strokeWidth="1.500" /><ellipse cx="13" cy="8" rx="3.500" ry="3" stroke="#bbb" strokeWidth="1.500" /></Ic>],
  ["Türleri göster", <Ic w={16} h={11}><path d="M.5 .5h9v9h-9zM3.500 0v10M6.500 0v10M0 3.500h10M0 6.500h10" stroke={C} /><path d="M11 8h5l-2.500 3z" fill={C} /></Ic>],
  ["Seçenekler", <Ic w={11} h={11}><rect x=".5" y=".5" width="9" height="9" stroke="#707070" /><path d="M2 3h1M4 3h4M2 5h1M4 5h4M2 7h1M4 7h4" stroke="#707070" /></Ic>],
  ["Yeni grup", <Ic w={12} h={10}><path d="M0 0h5l1 2h6v8H0z" fill="#b0b0b0" /></Ic>],
  ["Yeni renk", <NewDoc c="#686868" />],
  ["Sil", <Trash />],
];

type Layer = { n: string; eye: boolean; top?: boolean; full?: boolean; art: string };
const layers: Layer[] = [
  { n: "katman 1", eye: true, top: true, art: "M2 8h3M6 7l1 2 1-2 1 2M10 8h6M11 9q3 3 5 0" },
  { n: "<Yol>", eye: true, full: true, art: "M1 9q5 0 9 1q5 0 5-3l-2 0" },
  { n: "<Yol>", eye: false, full: true, art: "M1 10q5-1 9 1q4-1 5-3l-3 0" },
  { n: "Asiv Tasa...", eye: true, art: "M2 8h3M6 8h4M11 9h6M3 10h5" },
];

function LayerRow({ l, i }: { l: Layer; i: number }) {
  return (
    <tr className={`h-[21px] border-b border-[#383838] ${l.top ? "bg-[#566172]" : "bg-[#555]"}`}>
      <td className="border-r border-[#383838] p-0">
        <button aria-label={`Görünürlük ${i + 1}`} className="ml-[3px] flex h-3 w-3 items-center justify-center">
          {l.eye && (
            <Ic w={12} h={9}>
              <path d="M0 5q6-7 12 0q-6 6-12 0z" fill="#666" stroke="#ccc" />
              <circle cx="6" cy="4.500" r="2.300" fill="#ddd" /><circle cx="6" cy="4.500" r="1" fill="#222" />
            </Ic>
          )}
        </button>
      </td>
      <td className="border-r border-[#383838] p-0" />
      <td className="border-r border-[#383838] bg-[#5d80df] p-0" />
      <td className="border-r border-[#383838] p-0">
        <div className={`flex items-center ${l.top ? "pl-[3px]" : "pl-10"}`}>
          {l.top && <button aria-label="Daralt" className="mr-[9px] flex"><Down fill="#e8e8e8" /></button>}
          <Ic w={18} h={18}><rect x=".5" y=".5" width="17" height="17" fill="#fff" stroke="#000" /><path d={l.art} stroke={l.full ? "#777" : "#222"} strokeWidth={l.full ? 1 : 1.8} /></Ic>
          <span className="pl-[5px] text-[11px]">{l.n}</span>
        </div>
      </td>
      <td className="relative p-0">
        <button aria-label={`Hedef ${i + 1}`} className="ml-1 flex">
          <Ic w={9} h={9}><circle cx="4.500" cy="4.500" r="3.700" fill={l.full ? "#a0a0a0" : "#444"} stroke="#bbb" strokeWidth="1.200" /></Ic>
        </button>
        {l.top && <span className="absolute top-0 right-0 flex"><Ic w={6} h={6}><path d="M0 0h6v6z" fill="#ccc" /></Ic></span>}
      </td>
    </tr>
  );
}

function RightColumn() {
  const lab = "w-[62px] shrink-0 text-right";
  return (
    <aside className="flex w-[242px] shrink-0 flex-col border-r border-l border-[#262626] bg-[#4a4a4a] font-['Roboto','Noto_Sans',sans-serif] text-[10px] font-medium text-[#dedede]">
      <Collapse dir="r" />
      <Panel>
        <Tabs items={["Renk", "Renk Kılavuzu"]} toggle />
        <div className="flex flex-col pt-2 pl-[5px]">
          <div className="flex self-start border border-[#262626]">
            <NoneSwatch s={12} />
            <button aria-label="Siyah" className="ml-px w-3 bg-black" />
            <button aria-label="Beyaz" className="ml-px w-3 bg-white" />
          </div>
          <div className="mt-[9px] flex items-end justify-between">
            <div className="relative mb-[6px] h-8 w-[218px] border border-[#262626] bg-[linear-gradient(to_right,#d81a1c,#f06a20_8%,#f6ee30_17%,#7abb2e_28%,#3aa53c_40%,#33b5b0_48%,#35b4ee_54%,#2c54a5_64%,#2f3c93_74%,#a03a94_85%,#e6108a_92%,#d3122a)]">
              <div className="h-full w-full bg-[linear-gradient(to_bottom,#fff,#fffc_12%,#fff0_60%,#0000_60%,#000e)]" />
            </div>
            <Grip />
          </div>
        </div>
      </Panel>
      <Panel className="border-t">
        <Tabs items={["Renk Örnekleri"]} />
        <div className="flex items-start justify-between pt-[5px] pr-[7px] pl-[5px]">
          <FillStroke />
          <div className="flex border border-[#2a2a2a]">
            <button aria-label="Liste görünümü" className="flex h-5 w-6 items-center justify-center bg-[#5c5c5c]"><Ic w={12} h={14}><path d="M0 1h12M0 5h12M0 9h12M0 13h12" stroke="#ddd" strokeWidth="1.500" /></Ic></button>
            <button aria-label="Küçük resim görünümü" className="flex h-5 w-6 items-center justify-center bg-[#2e2e2e]"><Ic w={14} h={14}><path d="M0 2h14M0 7h14M0 12h14" stroke="#ddd" strokeWidth="4" strokeDasharray="4 1" /></Ic></button>
          </div>
        </div>
        <div className="mt-[6px]"><Swatches /></div>
        <div className="flex h-[19px] items-center justify-between pl-2">
          {swatchTools.map(([n, d]) => <button key={n} aria-label={n} className="flex">{d}</button>)}
          <span className="flex self-end"><Grip /></span>
        </div>
      </Panel>
      <Panel className="border-t">
        <Tabs items={["Kontur", "Degrade", "Saydamlık"]} active={1} toggle />
        <div className="flex flex-col pl-[6px]">
          <div className="flex pt-[7px] pr-[7px]">
            <div className="flex w-[38px] flex-col">
              <button aria-label="Degrade önizleme" className="flex items-center gap-1">
                <span className="h-[30px] w-[30px] shrink-0 border border-[#262626] bg-[linear-gradient(to_right,#fff,#8c8c8c_60%,#222)]" />
                <Ic w={5} h={3}><path d="M0 0h5L2.500 3z" fill="#ddd" /></Ic>
              </button>
              <div className="mt-[6px]"><FillStroke /></div>
              <button aria-label="Degradeyi ters çevir" className="mt-[11px] ml-[7px] flex">
                <Ic w={16} h={14}><rect x=".5" y=".5" width="8" height="5" stroke="#777" fill="#666" /><rect x="6.500" y="8.500" width="8" height="5" stroke="#777" fill="#666" /><path d="M10 2h5l-2.500 3zM0 12h4l-2-3z" fill="#777" /></Ic>
              </button>
            </div>
            <div className="flex flex-1 flex-col gap-[7px] text-[#8e8e8e]">
              <div className="flex items-center gap-[5px]">
                <label htmlFor="gtype" className="w-[43px] text-right font-semibold text-[#e2e2e2]">Tür:</label>
                <div className="flex h-[19px] flex-1 items-center border border-[#333] bg-[#585858] pr-[5px]">
                  <select id="gtype" className="h-full flex-1 appearance-none border-r border-[#3a3a3a] bg-transparent" />
                  <span className="ml-1 flex"><Down /></span>
                </div>
              </div>
              <div className="flex items-center gap-[5px]">
                <span className="w-[43px] text-right whitespace-nowrap">Kontur:</span>
                <div className="flex border border-[#333]">
                  {["İçinde", "Boyunca", "Karşısında"].map((n, i) => (
                    <button key={n} aria-label={n} className={`flex h-[17px] w-[22px] items-center justify-center bg-[#555] ${i ? "border-l border-[#333]" : ""}`}>
                      <Ic w={15} h={14}><path d="M1 14V1h14" stroke="#3c3c3c" strokeWidth="1.500" /><path d={i === 1 ? "M1 1l5 5" : "M3 14V3h12"} stroke="#6d6d6d" strokeWidth="2" /><path d="M6.500 14V6.500H15" stroke="#7d7d7d" /></Ic>
                    </button>
                  ))}
                </div>
              </div>
              <div className="flex items-center gap-[5px]">
                <label htmlFor="Açı" className="flex w-[43px] justify-end pr-1"><Ic w={11} h={10}><path d="M9 0L1 9h10M7 3q3 2 3 6" stroke="#777" /></Ic></label>
                <Combo label="Açı" />
              </div>
              <div className="flex items-center gap-[5px]">
                <label htmlFor="En boy oranı" className="flex w-[43px] justify-end"><Ic w={15} h={13}><path d="M1.500 1v11M0 3l1.500-2L3 3M0 10l1.500 2L3 10M5 12h9" stroke="#777" /><circle cx="9.500" cy="6" r="4" stroke="#777" fill="#555" /></Ic></label>
                <Combo label="En boy oranı" />
              </div>
            </div>
          </div>
          <div className="mt-[14px] flex items-center gap-3 pl-1">
            <div className="h-[19px] w-[195px] border border-[#262626] bg-[linear-gradient(to_right,#fff,#949494_52%,#5a5a5a_78%,#383838_88%,#000)]" />
            <button aria-label="Durağı sil" className="flex"><Trash /></button>
          </div>
          <div className="mt-[27px] flex items-end justify-between">
            <div className="flex flex-col gap-[7px] pb-[6px] pl-[19px] text-[#929292]">
              <div className="flex items-center gap-[5px]"><label htmlFor="Opaklık" className={lab}>Opaklık:</label><Combo label="Opaklık" /></div>
              <div className="flex items-center gap-[5px]"><label htmlFor="Konum" className={lab}>Konum:</label><Combo label="Konum" /></div>
            </div>
            <Grip />
          </div>
        </div>
      </Panel>
      <Panel className="border-t">
        <Tabs items={["Kitaplıklar", "Görünüm", "Grafik Stilleri"]} menu={false} />
      </Panel>
      <section className="flex min-h-0 flex-1 flex-col border-t border-b border-[#262626]">
        <Tabs items={["Katmanlar", "Çalışma Yüzeyleri"]} />
        <div className="mx-[5px] mt-[5px] flex-1 border border-[#333]">
          <table className="w-full table-fixed border-collapse">
            <colgroup><col className="w-[21px]" /><col className="w-[21px]" /><col className="w-[6px]" /><col /><col className="w-[34px]" /></colgroup>
            <tbody>{layers.map((l, i) => <LayerRow key={i} l={l} i={i} />)}</tbody>
          </table>
        </div>
        <div className="flex h-5 items-center pr-[27px] pl-[5px]">
          <span className="flex-1">1 Katman</span>
          <div className="flex items-center gap-[14px]">
            <button aria-label="Nesneyi bul" className="flex"><Ic w={12} h={12}><circle cx="7.500" cy="4.500" r="4" stroke="#686868" /><path d="M5 8l-4 4" stroke="#686868" strokeWidth="1.500" /></Ic></button>
            <button aria-label="Kırpma maskesi" className="flex"><Ic w={11} h={11}><rect x=".5" y=".5" width="7" height="7" stroke={C} /><rect x="3.500" y="3.500" width="7" height="7" stroke={C} /><path d="M4 4h3v3H4z" fill={C} /></Ic></button>
            <button aria-label="Yeni alt katman" className="flex"><Ic w={14} h={11}><path d="M5 1h9v10H9V6H5z" fill={C} /><path d="M0 1v3h4M3 2l3 2-3 3z" stroke={C} /></Ic></button>
            <button aria-label="Yeni katman" className="flex"><NewDoc c="#c2c2c2" /></button>
            <button aria-label="Katmanı sil" className="flex"><Trash /></button>
          </div>
        </div>
      </section>
    </aside>
  );
}

export default function App() {
  return (
    <div className="flex h-screen flex-col overflow-hidden bg-[#4a4a4a] font-['Noto_Sans',sans-serif] select-none">
      <MenuBar />
      <ControlBar />
      <div className="flex min-h-0 flex-1">
        <Toolbar />
        <DocumentArea />
        <MiddleColumn />
        <RightColumn />
      </div>
    </div>
  );
}
